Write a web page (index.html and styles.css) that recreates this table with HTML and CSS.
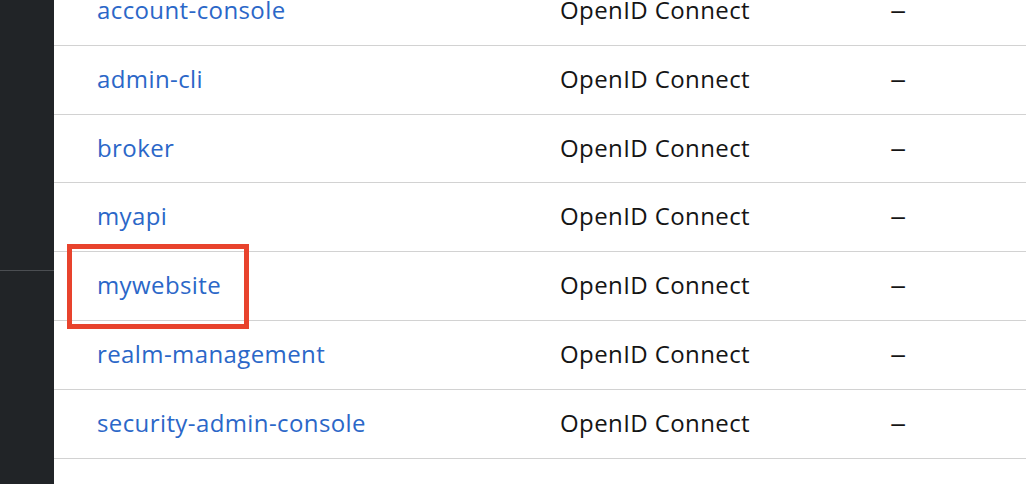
FILE: index.html
```html
<!DOCTYPE html>
<html lang="en">
<head>
<meta charset="utf-8">
<title>Clients</title>
<link rel="stylesheet" href="styles.css">
</head>
<body>
<div class="layout">
  <aside class="sidebar">
    <div class="sidebar-top"></div>
  </aside>
  <main class="main">
    <div class="table">
      <div class="row"><a class="cell link" href="#">account-console</a><span class="cell">OpenID Connect</span><span class="cell dash">–</span></div>
      <div class="row"><a class="cell link" href="#">admin-cli</a><span class="cell">OpenID Connect</span><span class="cell dash">–</span></div>
      <div class="row"><a class="cell link" href="#">broker</a><span class="cell">OpenID Connect</span><span class="cell dash">–</span></div>
      <div class="row"><a class="cell link" href="#">myapi</a><span class="cell">OpenID Connect</span><span class="cell dash">–</span></div>
      <div class="row highlighted"><a class="cell link" href="#">mywebsite</a><span class="cell">OpenID Connect</span><span class="cell dash">–</span><span class="callout"></span></div>
      <div class="row"><a class="cell link" href="#">realm-management</a><span class="cell">OpenID Connect</span><span class="cell dash">–</span></div>
      <div class="row"><a class="cell link" href="#">security-admin-console</a><span class="cell">OpenID Connect</span><span class="cell dash">–</span></div>
    </div>
  </main>
</div>
</body>
</html>
```

FILE: styles.css
```css
html, body {
  margin: 0;
  padding: 0;
  background: #ffffff;
  overflow: hidden;
}

body {
  font-family: "Open Sans", "Liberation Sans", sans-serif;
  font-size: 24px;
  letter-spacing: 0.4px;
  color: #151515;
}

.layout {
  display: flex;
  height: 484px;
}

.sidebar {
  width: 54px;
  flex: 0 0 54px;
  background: #212427;
  display: flex;
  flex-direction: column;
}

.sidebar-top {
  height: 271px;
  border-bottom: 1px solid #4b4e52;
  box-sizing: border-box;
}

.main {
  flex: 1;
  min-width: 0;
}

.table {
  margin-top: -23px;
}

.row {
  position: relative;
  display: grid;
  grid-template-columns: 463px 330px 1fr;
  align-items: center;
  height: 68.83px;
  box-sizing: border-box;
  padding-left: 43px;
  padding-bottom: 2px;
  border-bottom: 1px solid #d2d2d2;
}

.cell {
  white-space: nowrap;
  line-height: 32px;
}

.link {
  color: #2b67c8;
  text-decoration: none;
}

.dash {
  display: inline-block;
  justify-self: start;
  transform: scaleX(1.35);
  transform-origin: left center;
}

.callout {
  position: absolute;
  left: 13px;
  top: -8px;
  width: 182px;
  height: 85px;
  box-sizing: border-box;
  border: 5px solid #e8432d;
  pointer-events: none;
}
```
